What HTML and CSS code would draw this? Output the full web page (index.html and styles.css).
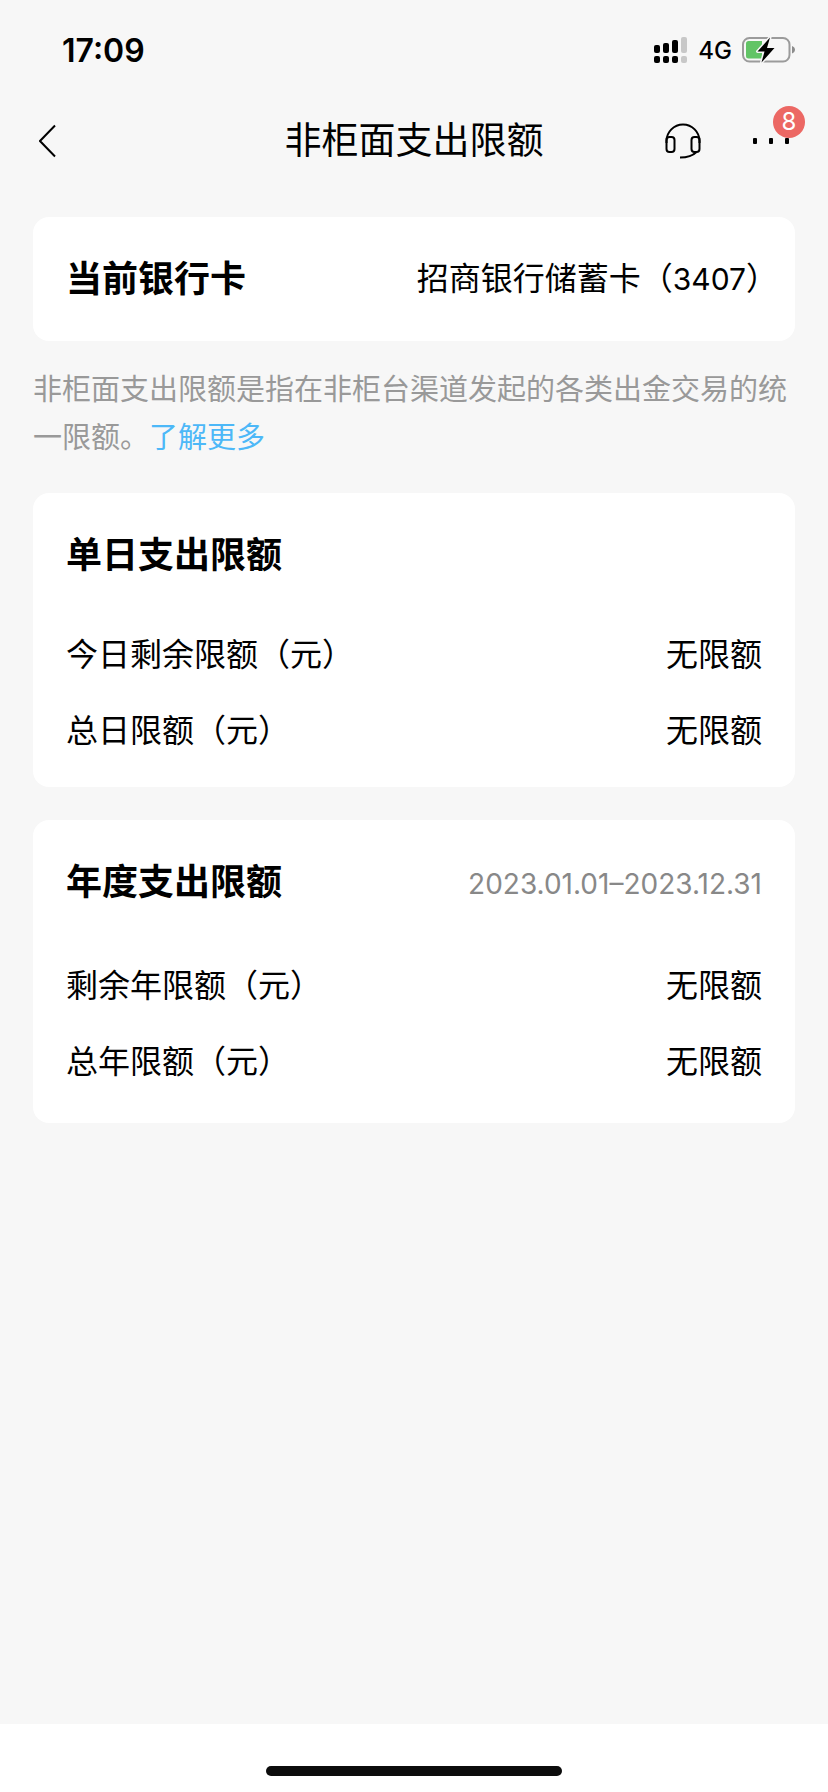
FILE: index.html
```html
<!DOCTYPE html>
<html lang="zh-CN">
<head>
<meta charset="utf-8">
<meta name="viewport" content="width=device-width, initial-scale=1">
<title>非柜面支出限额</title>
<link rel="stylesheet" href="styles.css">
</head>
<body>
<div class="screen">
  <div class="status-bar">
    <time class="clock">17:09</time>
    <div class="status-icons">
      <svg width="34" height="28" viewBox="0 0 34 28" aria-hidden="true">
        <g fill="#000">
          <rect x="0" y="9" width="6" height="8" rx="2"/>
          <rect x="9" y="7" width="6" height="10" rx="2"/>
          <rect x="18" y="4" width="6" height="13" rx="2"/>
          <rect x="0" y="20" width="6" height="7" rx="2"/>
          <rect x="9" y="20" width="6" height="7" rx="2"/>
          <rect x="18" y="20" width="6" height="7" rx="2"/>
        </g>
        <g fill="#c8c8c8">
          <rect x="27" y="1" width="6" height="16" rx="2"/>
          <rect x="27" y="20" width="6" height="7" rx="2"/>
        </g>
      </svg>
      <span class="network">4G</span>
      <svg width="54" height="28" viewBox="0 0 54 28" aria-hidden="true">
        <rect x="1" y="2" width="46.500" height="23.500" rx="6.500" fill="none" stroke="#9b9b9b" stroke-width="2"/>
        <path d="M6.500 5H20V22.500H6.500A2.500 2.500 0 0 1 4 20V7.500A2.500 2.500 0 0 1 6.500 5Z" fill="#62c466"/>
        <path d="M50 10C54 11.500 54 16 50 17.500Z" fill="#8c8c8c"/>
        <path d="M28 1.500L15.500 15.500H22.500L19.500 26.500L32.500 12H25Z" fill="#000" stroke="#f7f7f7" stroke-width="3" stroke-linejoin="round" paint-order="stroke"/>
      </svg>
    </div>
  </div>

  <header class="nav-bar">
    <button class="icon-button" type="button" aria-label="返回">
      <svg width="18" height="34" viewBox="0 0 18 34" fill="none" stroke="#000" stroke-width="2"><path d="M16 1.500L1 17L16 32.500"/></svg>
    </button>
    <h1 class="nav-title">非柜面支出限额</h1>
    <div class="nav-actions">
      <button class="icon-button" type="button" aria-label="客服">
        <svg width="36" height="36" viewBox="0 0 36 36" fill="none" stroke="#000" stroke-width="2">
          <path d="M1.500 20V18A16.500 16.500 0 0 1 34.500 18V20"/>
          <rect x="1.500" y="14" width="8" height="15" rx="3"/>
          <rect x="26.500" y="14" width="8" height="15" rx="3"/>
          <path d="M31.500 29C27 33.500 22 34.500 15 34.500"/>
        </svg>
      </button>
      <button class="icon-button" type="button" aria-label="更多">
        <svg width="36" height="6" viewBox="0 0 36 6" fill="#000"><rect width="4" height="6" rx="1"/><rect x="16" width="4" height="6" rx="1"/><rect x="32" width="4" height="6" rx="1"/></svg>
        <span class="badge">8</span>
      </button>
    </div>
  </header>

  <main class="content">
    <section class="card card-head">
      <h2 class="card-title">当前银行卡</h2>
      <span class="account">招商银行储蓄卡（<span class="digits">3407</span><span class="half">）</span></span>
    </section>

    <p class="note">非柜面支出限额是指在非柜台渠道发起的各类出金交易的统一限额。<a class="link" href="#">了解更多</a></p>

    <section class="card">
      <div class="card-head">
        <h2 class="card-title">单日支出限额</h2>
      </div>
      <dl class="limits">
        <div class="limit"><dt>今日剩余限额（元）</dt><dd>无限额</dd></div>
        <div class="limit"><dt>总日限额（元）</dt><dd>无限额</dd></div>
      </dl>
    </section>

    <section class="card">
      <div class="card-head">
        <h2 class="card-title">年度支出限额</h2>
        <span class="period">2023.01.01–2023.12.31</span>
      </div>
      <dl class="limits limits-roomy">
        <div class="limit"><dt>剩余年限额（元）</dt><dd>无限额</dd></div>
        <div class="limit"><dt>总年限额（元）</dt><dd>无限额</dd></div>
      </dl>
    </section>
  </main>

  <footer class="home-area"><div class="home-indicator"></div></footer>
</div>
</body>
</html>
```

FILE: styles.css
```css
* { box-sizing: border-box; margin: 0; padding: 0; }

body {
  background: #f7f7f7;
  color: #000;
  font-family: "Inter", "Noto Sans CJK SC", sans-serif;
  font-size: 32px;
}

svg { display: block; }

.screen {
  display: flex;
  flex-direction: column;
  min-height: 100vh;
}

.status-bar {
  display: flex;
  align-items: center;
  justify-content: space-between;
  height: 100px;
  padding: 0 32px 0 62px;
}

.clock { font-size: 32px; font-weight: 600; }

.status-icons { display: flex; align-items: center; gap: 10px; }

.network { font-size: 24px; font-weight: 500; }

.nav-bar {
  display: grid;
  grid-template-columns: 1fr auto 1fr;
  align-items: center;
  height: 82px;
  padding: 0 39px;
}

.nav-title { font-size: 37px; font-weight: 400; line-height: 48px; }

.nav-actions {
  display: flex;
  align-items: center;
  justify-content: flex-end;
  gap: 52px;
}

.icon-button {
  position: relative;
  justify-self: start;
  border: 0;
  background: none;
  color: inherit;
  font: inherit;
}

.badge {
  position: absolute;
  right: -16px;
  bottom: 6px;
  width: 32px;
  height: 32px;
  border-radius: 50%;
  background: #ec6864;
  color: #fff;
  font-size: 24px;
  line-height: 32px;
  text-align: center;
}

.content { flex: 1; padding: 35px 33px; }

.card { border-radius: 16px; background: #fff; }

.card + .card { margin-top: 33px; }

.card-head {
  display: flex;
  align-items: center;
  justify-content: space-between;
  height: 124px;
}

.card-head, .limits { padding-left: 33px; padding-right: 33px; }

.card-title { font-size: 36px; font-weight: 700; line-height: 48px; }

.account { line-height: 48px; }

.digits { font-size: 30px; }

.half { font-feature-settings: "halt"; }

.note {
  margin: 25px 0 31px;
  color: #999;
  font-size: 29px;
  line-height: 48px;
}

.link { color: #4db8f8; text-decoration: none; }

.period { padding-top: 4px; color: #888; font-size: 28px; }

.limits { padding-bottom: 18px; }

.limits-roomy { padding-top: 4px; padding-bottom: 23px; }

.limit {
  display: flex;
  justify-content: space-between;
  line-height: 76px;
}

.home-area {
  display: flex;
  align-items: flex-end;
  justify-content: center;
  height: 68px;
  padding-bottom: 16px;
  background: #fff;
}

.home-indicator {
  width: 296px;
  height: 10px;
  border-radius: 5px;
  background: #0c0c0c;
}
```
